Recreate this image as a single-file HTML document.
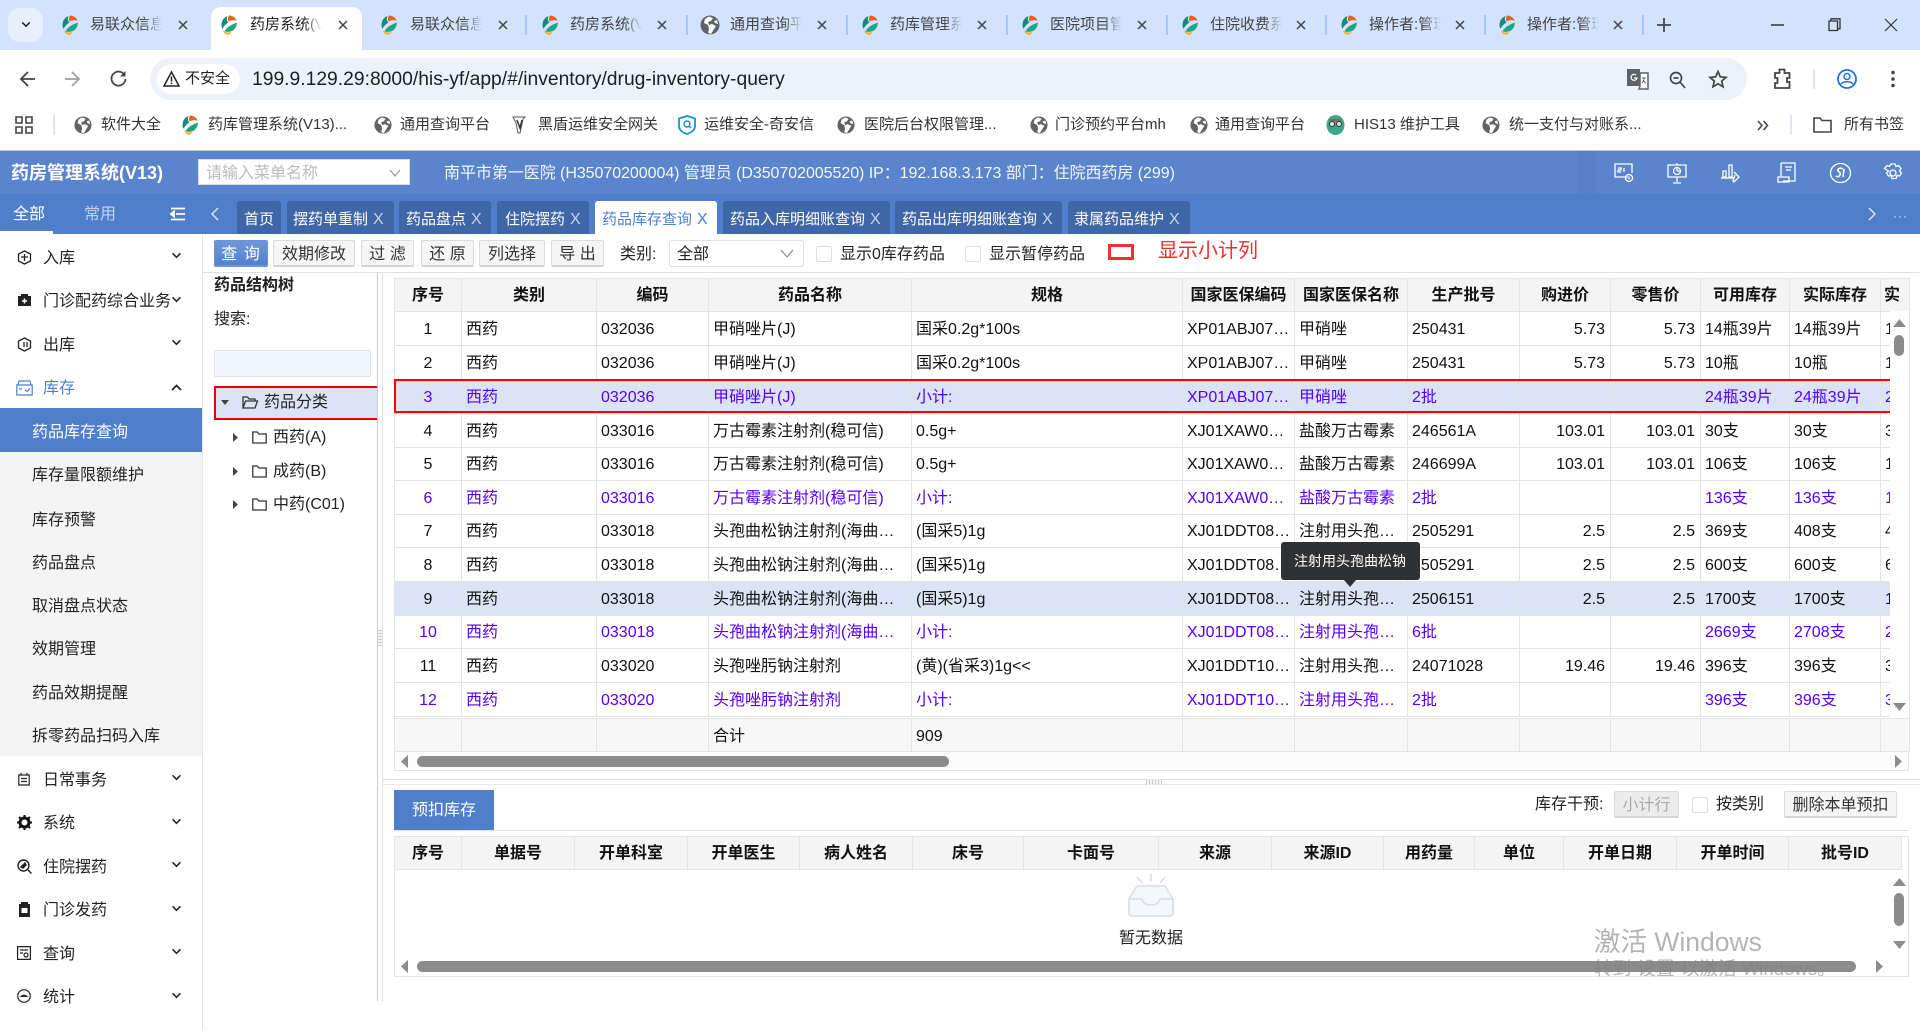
<!DOCTYPE html>
<html lang="zh"><head><meta charset="utf-8"><title>药房管理系统</title>
<style>
*{box-sizing:border-box}
html,body{margin:0;padding:0;width:1920px;height:1030px;overflow:hidden;background:#fff;font-family:"Liberation Sans","WenQuanYi Zen Hei","Noto Sans CJK SC",sans-serif;font-size:16px;color:#222}
.a{position:absolute}
.t{position:absolute;white-space:nowrap;line-height:20px}
.ct{position:absolute;top:15px;width:72px;overflow:hidden;white-space:nowrap;font-size:15px;line-height:20px;color:#444;-webkit-mask-image:linear-gradient(90deg,#000 75%,transparent);mask-image:linear-gradient(90deg,#000 75%,transparent)}
.sep{position:absolute;top:15px;width:2px;height:20px;background:#a9c7f5}
.bm{position:absolute;top:115px;white-space:nowrap;font-size:15px;line-height:20px;color:#333}
.tab{position:absolute;top:201px;height:33px;background:#3f66a6;color:#fff;font-size:15px;line-height:37px;border-radius:3px 3px 0 0;white-space:nowrap;padding-left:7px;overflow:hidden}
.tab b{font-weight:normal;font-size:16px;color:#c6d4ec;margin-left:5px}
.btn{position:absolute;top:240px;height:27px;line-height:27px;text-align:center;background:#f5f5f5;border:1px solid #dcdcdc;border-bottom:2px solid #d4d4d4;border-radius:2px;white-space:nowrap;color:#333}
.cb{position:absolute;width:16px;height:16px;border:1px solid #dcdfe6;border-radius:2px;background:#fff}
.m{position:absolute;left:43px;white-space:nowrap;line-height:20px}
.s{position:absolute;left:32px;white-space:nowrap;line-height:20px}
table{border-collapse:collapse;table-layout:fixed;position:absolute}
td,th{border:1px solid #e4e4e4;padding:2px 4px 0;white-space:nowrap;overflow:hidden;font-weight:normal;font-size:16px;line-height:20px;text-align:left;color:#111}
th{background:#f4f4f4;text-align:center;font-weight:bold;color:#111;padding:2px 0 0}
td.c{text-align:center}td.r{text-align:right;padding-right:5px}
tr.p td{color:#5500ff}
tr.sel td{background:#dbe4f4}
tr.foot td{background:#f7f7f7;padding-top:4px}
.bar{position:absolute;background:#8c8c8c;border-radius:6px}
svg{position:absolute;overflow:visible}
</style></head><body>
<svg width="0" height="0" style="position:absolute"><defs>
<symbol id="logo" viewBox="0 0 20 20"><path d="M10 .5C14 .5 17 3 17.500 6 15 4.500 12 5 9.500 6.500 8.500 4 9 2 10 .5Z" fill="#e8641b"/><path d="M8.500 1C4.500 2.500 2.500 6 2.500 10 2.500 11.500 3 13 3.500 13.800 5 10.800 7.500 8.500 9.500 7.500 7.500 6 7.500 3 8.500 1Z" fill="#128a7c"/><path d="M17.800 7.500C18 11 16 14.500 13 16 11 17 8 17 5.500 16.500 7 13 11 10 17.800 7.500Z" fill="#1ca77f"/><path d="M4 15.200C5.500 17.500 9 18 12.500 17 11.500 18.500 10.500 19.700 9.500 19.700 7 19.700 4.500 18 4 15.200Z" fill="#f4b120"/></symbol>
<symbol id="globe" viewBox="0 0 20 20"><circle cx="10" cy="10" r="9.500" fill="#5f6368"/><path d="M9 1.500 5 4 4 8l4 2 1 4-1 4 3 1 3-5 2-3-4-2-3 1-1-3 3-1 2-3-3-1ZM17 5l-3 1 1 2 3 1-1-4Z" fill="#fff"/></symbol>
<symbol id="chev" viewBox="0 0 12 8"><path d="M1.500 1.500 6 6l4.500-4.500" fill="none" stroke="#222" stroke-width="1.800"/></symbol>
<symbol id="x" viewBox="0 0 10 10"><path d="M1 1l8 8M9 1 1 9" fill="none" stroke="#444" stroke-width="1.500"/></symbol>
<symbol id="fold" viewBox="0 0 15 13"><path d="M.8 12V1h4.500l1.500 2h7.400v9Z" fill="none" stroke="#333" stroke-width="1.300"/></symbol>
</defs></svg>

<!-- Chrome tab strip -->
<div class="a" style="left:0;top:0;width:1920px;height:50px;background:#d3e3fd"></div>
<div class="a" style="left:8px;top:8px;width:35px;height:34px;background:#e9f0fd;border-radius:12px"></div>
<svg style="left:21px;top:21px" width="10" height="7"><use href="#chev" width="10" height="7"/></svg>
<div class="a" style="left:211px;top:7px;width:151px;height:44px;background:#fff;border-radius:10px 10px 0 0"></div>
<div class="a" style="left:0;top:50px;width:1920px;height:100px;background:#fff;border-radius:10px 10px 0 0"></div>

<svg style="left:60px;top:15px" width="20" height="20"><use href="#logo" width="20" height="20"/></svg><div class="ct" style="left:90px">易联众信息</div><svg style="left:178px;top:20px" width="10" height="10"><use href="#x" width="10" height="10"/></svg>
<svg style="left:219px;top:15px" width="20" height="20"><use href="#logo" width="20" height="20"/></svg><div class="ct" style="left:250px;color:#222">药房系统(V</div><svg style="left:338px;top:20px" width="10" height="10"><use href="#x" width="10" height="10"/></svg>
<svg style="left:379px;top:15px" width="20" height="20"><use href="#logo" width="20" height="20"/></svg><div class="ct" style="left:410px">易联众信息</div><svg style="left:498px;top:20px" width="10" height="10"><use href="#x" width="10" height="10"/></svg>
<svg style="left:540px;top:15px" width="20" height="20"><use href="#logo" width="20" height="20"/></svg><div class="ct" style="left:570px">药房系统(V</div><svg style="left:657px;top:20px" width="10" height="10"><use href="#x" width="10" height="10"/></svg>
<svg style="left:700px;top:15px" width="20" height="20"><use href="#globe" width="20" height="20"/></svg><div class="ct" style="left:730px">通用查询平</div><svg style="left:817px;top:20px" width="10" height="10"><use href="#x" width="10" height="10"/></svg>
<svg style="left:860px;top:15px" width="20" height="20"><use href="#logo" width="20" height="20"/></svg><div class="ct" style="left:890px">药库管理系</div><svg style="left:977px;top:20px" width="10" height="10"><use href="#x" width="10" height="10"/></svg>
<svg style="left:1020px;top:15px" width="20" height="20"><use href="#logo" width="20" height="20"/></svg><div class="ct" style="left:1050px">医院项目管</div><svg style="left:1137px;top:20px" width="10" height="10"><use href="#x" width="10" height="10"/></svg>
<svg style="left:1180px;top:15px" width="20" height="20"><use href="#logo" width="20" height="20"/></svg><div class="ct" style="left:1210px">住院收费系</div><svg style="left:1296px;top:20px" width="10" height="10"><use href="#x" width="10" height="10"/></svg>
<svg style="left:1339px;top:15px" width="20" height="20"><use href="#logo" width="20" height="20"/></svg><div class="ct" style="left:1369px">操作者:管理</div><svg style="left:1455px;top:20px" width="10" height="10"><use href="#x" width="10" height="10"/></svg>
<svg style="left:1497px;top:15px" width="20" height="20"><use href="#logo" width="20" height="20"/></svg><div class="ct" style="left:1527px">操作者:管理</div><svg style="left:1613px;top:20px" width="10" height="10"><use href="#x" width="10" height="10"/></svg>
<div class="sep" style="left:525px"></div><div class="sep" style="left:686px"></div><div class="sep" style="left:846px"></div><div class="sep" style="left:1006px"></div><div class="sep" style="left:1166px"></div><div class="sep" style="left:1325px"></div><div class="sep" style="left:1484px"></div><div class="sep" style="left:1642px"></div>
<svg style="left:1657px;top:18px" width="14" height="14"><path d="M7 0v14M0 7h14" stroke="#444" stroke-width="1.800"/></svg>
<svg style="left:1771px;top:24px" width="13" height="2"><path d="M0 1h13" stroke="#333" stroke-width="1.500"/></svg>
<svg style="left:1828px;top:18px" width="13" height="13"><path d="M3 3V.8h9v10H9.500M1 3h8.500v9.500H1Z" fill="none" stroke="#333" stroke-width="1.300"/></svg>
<svg style="left:1885px;top:19px" width="12" height="12"><path d="M0 0l12 12M12 0 0 12" stroke="#333" stroke-width="1.200"/></svg>

<!-- Toolbar -->
<svg style="left:19px;top:70px" width="17" height="18"><path d="M16 9H2M9 2 2 9l7 7" fill="none" stroke="#444" stroke-width="1.800"/></svg>
<svg style="left:64px;top:70px" width="17" height="18"><path d="M1 9h14M8 2l7 7-7 7" fill="none" stroke="#9aa0a6" stroke-width="1.800"/></svg>
<svg style="left:110px;top:70px" width="17" height="18"><path d="M14.500 5A7 7 0 1 0 15.500 9" fill="none" stroke="#444" stroke-width="1.800"/><path d="M15.500 1v5.500H10" fill="#444"/></svg>
<div class="a" style="left:150px;top:58px;width:1597px;height:42px;background:#edf2fa;border-radius:21px"></div>
<div class="a" style="left:157px;top:64px;width:83px;height:30px;background:#fff;border-radius:15px"></div>
<svg style="left:163px;top:71px" width="17" height="16"><path d="M8.500 1 16 15H1Z" fill="none" stroke="#222" stroke-width="1.500"/><path d="M8.500 5.500v5M8.500 11.500v1.500" stroke="#222" stroke-width="1.500"/></svg>
<div class="t" style="left:185px;top:69px;font-size:15px;color:#222">不安全</div>
<div class="t" style="left:252px;top:69px;font-size:19.300px;line-height:22px;color:#1f1f1f">199.9.129.29:8000/his-yf/app/#/inventory/drug-inventory-query</div>
<svg style="left:1627px;top:69px" width="22" height="21"><rect x="0" y="0" width="13" height="17" fill="#5f6368"/><path d="M13 4h8v16h-9l1-3V4Z" fill="#fff" stroke="#5f6368" stroke-width="1.500"/><path d="M9 6a3 3 0 1 0 1 3H7" fill="none" stroke="#fff" stroke-width="1.200"/><path d="M15 9h4M17 9c0 3-1 4-2 5M16 11c1 1 2 3 3 3" fill="none" stroke="#5f6368"/></svg>
<svg style="left:1669px;top:71px" width="17" height="18"><circle cx="7" cy="7" r="5.500" fill="none" stroke="#444" stroke-width="1.700"/><path d="M11 11l5 6M4.500 7h5" stroke="#444" stroke-width="1.700"/></svg>
<svg style="left:1709px;top:70px" width="18" height="18"><path d="M9 1.500 11.300 6.800 17 7.400l-4.300 3.700L14 16.800 9 13.800 4 16.800l1.300-5.700L1 7.400l5.700-.6Z" fill="none" stroke="#444" stroke-width="1.700"/></svg>
<svg style="left:1773px;top:68px" width="18" height="21"><path d="M2 5h4.500V1.500h5V5H16.500v5h-2.500v4h2.500v6H2v-5h2.500v-5H2Z" fill="none" stroke="#444" stroke-width="1.800"/></svg>
<div class="a" style="left:1813px;top:69px;width:2px;height:20px;background:#dbe6f7"></div>
<svg style="left:1837px;top:69px" width="20" height="20"><circle cx="10" cy="10" r="9" fill="#fff" stroke="#1a73e8" stroke-width="1.800"/><circle cx="10" cy="7.500" r="3" fill="none" stroke="#1a73e8" stroke-width="1.500"/><path d="M4 15c2-3 10-3 12 0" fill="none" stroke="#1a73e8" stroke-width="1.500"/></svg>
<svg style="left:1891px;top:70px" width="4" height="18"><circle cx="2" cy="2.500" r="1.800" fill="#444"/><circle cx="2" cy="9" r="1.800" fill="#444"/><circle cx="2" cy="15.500" r="1.800" fill="#444"/></svg>

<!-- Bookmarks -->
<svg style="left:15px;top:116px" width="18" height="18"><path d="M1 1h6v6H1ZM11 1h6v6h-6ZM1 11h6v6H1ZM11 11h6v6h-6Z" fill="none" stroke="#444" stroke-width="1.600"/></svg>
<div class="a" style="left:53px;top:115px;width:2px;height:20px;background:#dbe6f7"></div>
<svg style="left:74px;top:116px" width="18" height="18"><use href="#globe" width="18" height="18"/></svg><div class="bm" style="left:101px">软件大全</div>
<svg style="left:180px;top:115px" width="20" height="20"><use href="#logo" width="20" height="20"/></svg><div class="bm" style="left:208px">药库管理系统(V13)...</div>
<svg style="left:374px;top:116px" width="18" height="18"><use href="#globe" width="18" height="18"/></svg><div class="bm" style="left:400px">通用查询平台</div>
<svg style="left:512px;top:115px" width="14" height="20"><path d="M1 2h12l-2 2-3 14H6L4 8 1 2Z" fill="#fff" stroke="#555"/><path d="M5 5l3 8 2-8" fill="none" stroke="#333" stroke-width="1.500"/></svg><div class="bm" style="left:538px">黑盾运维安全网关</div>
<svg style="left:678px;top:115px" width="18" height="20"><path d="M9 1 17 3.500V11c0 4-4 7-8 8-4-1-8-4-8-8V3.500Z" fill="none" stroke="#1a8fe0" stroke-width="1.800"/><circle cx="9" cy="9" r="3" fill="none" stroke="#1a8fe0" stroke-width="1.500"/><path d="M11 11l2 2" stroke="#1a8fe0" stroke-width="1.500"/></svg><div class="bm" style="left:704px">运维安全-奇安信</div>
<svg style="left:837px;top:116px" width="18" height="18"><use href="#globe" width="18" height="18"/></svg><div class="bm" style="left:864px">医院后台权限管理...</div>
<svg style="left:1030px;top:116px" width="18" height="18"><use href="#globe" width="18" height="18"/></svg><div class="bm" style="left:1055px">门诊预约平台mh</div>
<svg style="left:1190px;top:116px" width="18" height="18"><use href="#globe" width="18" height="18"/></svg><div class="bm" style="left:1215px">通用查询平台</div>
<svg style="left:1326px;top:115px" width="19" height="20"><ellipse cx="9.500" cy="10" rx="9" ry="10" fill="#3ba58d"/><circle cx="6" cy="9" r="2.500" fill="#cfe9e4" stroke="#333"/><circle cx="13" cy="9" r="2.500" fill="#cfe9e4" stroke="#333"/><path d="M4 5h11" stroke="#a5532a" stroke-width="1.500"/></svg><div class="bm" style="left:1354px">HIS13 维护工具</div>
<svg style="left:1482px;top:116px" width="18" height="18"><use href="#globe" width="18" height="18"/></svg><div class="bm" style="left:1509px">统一支付与对账系...</div>
<svg style="left:1757px;top:120px" width="12" height="11"><path d="M1 1l4 4.500L1 10M6.500 1l4 4.500-4 4.500" fill="none" stroke="#444" stroke-width="1.500"/></svg>
<div class="a" style="left:1790px;top:115px;width:2px;height:20px;background:#dbe6f7"></div>
<svg style="left:1813px;top:117px" width="19" height="16"><path d="M1 1h6l2 2.500h9V15H1Z" fill="none" stroke="#444" stroke-width="1.600"/></svg>
<div class="bm" style="left:1844px;color:#333">所有书签</div>
<div class="a" style="left:0;top:150px;width:1920px;height:1px;background:#c8c8c8"></div>

<!-- App header -->
<div class="a" style="left:0;top:151px;width:1920px;height:43px;background:#5a84cc"></div>
<div class="a" style="left:1577px;top:151px;width:19px;height:43px;background:#5680c8"></div>
<div class="a" style="left:0;top:194px;width:1920px;height:40px;background:#4f7ecb"></div>
<div class="t" style="left:11px;top:163px;font-size:18px;font-weight:bold;color:#fff">药房管理系统(V13)</div>
<div class="a" style="left:198px;top:159px;width:212px;height:26px;background:#fff;border:1px solid #ddd"></div>
<div class="t" style="left:206px;top:164px;color:#bbb">请输入菜单名称</div>
<svg style="left:389px;top:169px" width="12" height="8"><path d="M1 1l5 6 5-6" fill="none" stroke="#999" stroke-width="1.200"/></svg>
<div class="t" style="left:444px;top:164px;color:#fff;opacity:.93;font-size:16px;letter-spacing:-.05px">南平市第一医院 (H35070200004) 管理员 (D350702005520) IP：192.168.3.173 部门：住院西药房 (299)</div>
<svg style="left:1614px;top:163px" width="20" height="20" fill="none" stroke="#fff" stroke-width="1.300"><path d="M14 14H1V1h17v9"/><circle cx="15" cy="15" r="3.500"/><path d="M15 13.500v3M4 5h3v2H4v2h3M10 5v4"/></svg>
<svg style="left:1667px;top:163px" width="20" height="21" fill="none" stroke="#fff" stroke-width="1.300"><path d="M1 2h18v12H1ZM10 0v2M10 14v5M6 20h8"/><circle cx="10" cy="8" r="3.500"/><path d="M10 8V4.500M10 8h3.500"/></svg>
<svg style="left:1721px;top:163px" width="20" height="20" fill="none" stroke="#fff" stroke-width="1.300"><path d="M2 8h3v6H2ZM8 2h3v12H8ZM0 15h13M13 9l5 5-5 5-1-1 2-6"/></svg>
<svg style="left:1777px;top:162px" width="20" height="22" fill="none" stroke="#fff" stroke-width="1.300"><path d="M4 1h14v18H6M4 1v14M1 15h11v5H1ZM8 5h7M9 8h5"/></svg>
<svg style="left:1830px;top:163px" width="21" height="20" fill="none" stroke="#fff" stroke-width="1.300"><ellipse cx="10.500" cy="10" rx="10" ry="9.500"/><path d="M13 6c-3-2-6 0-5 2 1 1 3 1 2 4-1 2-3 2-4 1M14 6l-1 8" stroke-width="1.600"/></svg>
<svg style="left:1883px;top:163px" width="20" height="20" fill="none" stroke="#fff" stroke-width="1.300"><path d="M8 1h4l1 2.500 2.500-1 2.500 3-1.500 2.500 2 2-2 3-2.500-.5-1 3h-4l-1-3-2.500.5-2-3 2-2L1.500 5.500 4 2.500l2.500 1Z"/><circle cx="10" cy="10" r="3"/></svg>

<!-- Nav tabs row -->
<div class="t" style="left:13px;top:205px;color:#fff">全部</div>
<div class="a" style="left:0;top:231px;width:53px;height:3px;background:#fff"></div>
<div class="t" style="left:84px;top:205px;color:#c3d2ec">常用</div>
<svg style="left:171px;top:207px" width="14" height="14"><path d="M0 1.500h14M5 7h9M0 12.500h14M0 7l3-2.500v5Z" stroke="#fff" stroke-width="1.800" fill="#fff"/></svg>
<svg style="left:210px;top:207px" width="9" height="14"><path d="M8 1 2 7l6 6" fill="none" stroke="#dfe8f6" stroke-width="1.400"/></svg>
<div class="tab" style="left:237px;width:44px">首页</div>
<div class="tab" style="left:287px;width:107px;padding-left:6px">摆药单重制<b>X</b></div>
<div class="tab" style="left:399px;width:92px">药品盘点<b>X</b></div>
<div class="tab" style="left:497px;width:92px;padding-left:8px">住院摆药<b>X</b></div>
<div class="tab" style="left:595px;width:122px;background:#fff;color:#4f7ecb">药品库存查询<b style="color:#4f7ecb">X</b></div>
<div class="tab" style="left:723px;width:167px">药品入库明细账查询<b>X</b></div>
<div class="tab" style="left:895px;width:167px">药品出库明细账查询<b>X</b></div>
<div class="tab" style="left:1068px;width:122px;padding-left:6px">隶属药品维护<b>X</b></div>
<svg style="left:1868px;top:207px" width="9" height="14"><path d="M1 1l6 6-6 6" fill="none" stroke="#dfe8f6" stroke-width="1.400"/></svg>
<div class="t" style="left:1893px;top:206px;color:#dfe8f6;font-size:12px;letter-spacing:1px">···</div>

<!-- Sidebar -->
<div class="a" style="left:202px;top:234px;width:1px;height:796px;background:#e6e6e6"></div>
<div class="a" style="left:0;top:408px;width:202px;height:348px;background:#f4f4f4"></div>
<div class="a" style="left:0;top:408px;width:202px;height:44px;background:#4f7ecb"></div>
<svg style="left:17px;top:250px" width="15" height="15" fill="none" stroke="#222" stroke-width="1.300"><path d="M7.500 1l6 3v7l-6 3-6-3V4ZM4 7h7M7.500 4v7"/></svg><div class="m" style="top:249px">入库</div>
<svg style="left:18px;top:293px" width="13" height="14"><path d="M3 3V1h7v2h3v10H0V3Z" fill="#222"/><path d="M6.500 5.500v5M4 8h5" stroke="#fff" stroke-width="1.500"/></svg><div class="m" style="top:292px">门诊配药综合业务</div>
<svg style="left:17px;top:337px" width="15" height="15" fill="none" stroke="#222" stroke-width="1.300"><path d="M7.500 1l6 3v7l-6 3-6-3V4ZM7 5v5M10 5v5"/></svg><div class="m" style="top:336px">出库</div>
<svg style="left:16px;top:380px" width="17" height="16" fill="none" stroke="#4f7ecb" stroke-width="1.200"><path d="M2 5l1-4h11l1 4M.8 5h15.400v10H.8ZM3 9h3M9 10l2 1.500 3-3"/></svg><div class="m" style="top:379px;color:#4f7ecb">库存</div>
<div class="s" style="top:423px;color:#fff">药品库存查询</div>
<div class="s" style="top:466px">库存量限额维护</div>
<div class="s" style="top:511px">库存预警</div>
<div class="s" style="top:554px">药品盘点</div>
<div class="s" style="top:597px">取消盘点状态</div>
<div class="s" style="top:640px">效期管理</div>
<div class="s" style="top:684px">药品效期提醒</div>
<div class="s" style="top:727px">拆零药品扫码入库</div>
<svg style="left:18px;top:773px" width="12" height="13" fill="none" stroke="#222" stroke-width="1.200"><path d="M.8 2h10.400v10H.8ZM3 2V0M9 2V0M3 5.500h6M3 8.500h6"/></svg><div class="m" style="top:771px">日常事务</div>
<svg style="left:17px;top:815px" width="15" height="15"><circle cx="7.500" cy="7.500" r="4.500" fill="none" stroke="#111" stroke-width="3"/><path d="M7.500 0v3M7.500 12v3M0 7.500h3M12 7.500h3M2 2l2 2M11 11l2 2M13 2l-2 2M4 11l-2 2" stroke="#111" stroke-width="2"/></svg><div class="m" style="top:814px">系统</div>
<svg style="left:17px;top:859px" width="15" height="15" fill="none" stroke="#222" stroke-width="1.400"><circle cx="6.500" cy="6.500" r="5.500"/><path d="M11 11l3.500 3.500"/><path d="M4 8l4-4 1 2-3 3Z" fill="#222"/></svg><div class="m" style="top:858px">住院摆药</div>
<svg style="left:19px;top:902px" width="11" height="15"><path d="M2 0h7v2h2v13H0V2h2Z" fill="#222"/><rect x="2.500" y="6" width="6" height="5" fill="#fff"/></svg><div class="m" style="top:901px">门诊发药</div>
<svg style="left:17px;top:946px" width="14" height="14" fill="none" stroke="#222" stroke-width="1.200"><path d="M.6.6h12.800v12.800H.6ZM3 4h8M3 7h3"/><circle cx="9" cy="9" r="2"/></svg><div class="m" style="top:945px">查询</div>
<svg style="left:17px;top:989px" width="14" height="14"><circle cx="7" cy="7" r="6.300" fill="none" stroke="#222" stroke-width="1.200"/><path d="M3 8c1-3 7-3 8 0Z" fill="#222"/></svg><div class="m" style="top:988px">统计</div>
<svg style="left:171px;top:252px" width="11" height="7"><use href="#chev" width="11" height="7"/></svg>
<svg style="left:171px;top:296px" width="11" height="7"><use href="#chev" width="11" height="7"/></svg>
<svg style="left:171px;top:339px" width="11" height="7"><use href="#chev" width="11" height="7"/></svg>
<svg style="left:171px;top:384px" width="11" height="7"><path d="M1 6l4.500-4.500L10 6" fill="none" stroke="#222" stroke-width="1.700"/></svg>
<svg style="left:171px;top:774px" width="11" height="7"><use href="#chev" width="11" height="7"/></svg>
<svg style="left:171px;top:818px" width="11" height="7"><use href="#chev" width="11" height="7"/></svg>
<svg style="left:171px;top:861px" width="11" height="7"><use href="#chev" width="11" height="7"/></svg>
<svg style="left:171px;top:905px" width="11" height="7"><use href="#chev" width="11" height="7"/></svg>
<svg style="left:171px;top:948px" width="11" height="7"><use href="#chev" width="11" height="7"/></svg>
<svg style="left:171px;top:992px" width="11" height="7"><use href="#chev" width="11" height="7"/></svg>

<!-- Action bar -->
<div class="btn" style="left:214px;width:54px;background:linear-gradient(#6f97da,#5480cc);border-color:#6a92d6;color:#fff;letter-spacing:1px">查 询</div>
<div class="btn" style="left:273px;width:82px">效期修改</div>
<div class="btn" style="left:361px;width:53px">过 滤</div>
<div class="btn" style="left:421px;width:53px">还 原</div>
<div class="btn" style="left:479px;width:66px">列选择</div>
<div class="btn" style="left:551px;width:53px">导 出</div>
<div class="t" style="left:620px;top:245px">类别:</div>
<div class="a" style="left:669px;top:240px;width:135px;height:27px;border:1px solid #dcdfe6;border-radius:3px;background:#fff"></div>
<div class="t" style="left:677px;top:245px">全部</div>
<svg style="left:780px;top:249px" width="14" height="9"><path d="M1 1l6 7 6-7" fill="none" stroke="#888" stroke-width="1.200"/></svg>
<div class="cb" style="left:816px;top:246px"></div><div class="t" style="left:840px;top:245px">显示0库存药品</div>
<div class="cb" style="left:965px;top:246px"></div><div class="t" style="left:989px;top:245px">显示暂停药品</div>
<div class="a" style="left:1108px;top:244px;width:26px;height:16px;border:3px solid #f42d2d"></div>
<div class="t" style="left:1158px;top:240px;font-size:20px;line-height:22px;color:#f42d2d">显示小计列</div>
<div class="a" style="left:203px;top:272px;width:1717px;height:1px;background:#e0e0e0"></div>

<!-- Tree -->
<div class="t" style="left:214px;top:276px;font-weight:bold">药品结构树</div>
<div class="t" style="left:214px;top:310px">搜索:</div>
<div class="a" style="left:214px;top:350px;width:157px;height:27px;background:#eff6fe;border:1px solid #dfe3e8;border-radius:2px"></div>
<div class="a" style="left:214px;top:386px;width:163px;height:34px;background:#dbe4f4;border:2px solid #e60000;border-right:0"></div>
<svg style="left:221px;top:400px" width="8" height="5"><path d="M0 0h8L4 5Z" fill="#444"/></svg>
<svg style="left:242px;top:396px" width="16" height="13" fill="none" stroke="#333" stroke-width="1.300"><path d="M1 12V1h4.500l1.500 2h6v2M1 12l2.500-7H15.500L13 12Z"/></svg>
<div class="t" style="left:264px;top:393px">药品分类</div>
<svg style="left:233px;top:433px" width="5" height="9"><path d="M0 0v9l5-4.500Z" fill="#444"/></svg><svg style="left:252px;top:431px" width="15" height="13"><use href="#fold" width="15" height="13"/></svg><div class="t" style="left:273px;top:428px">西药(A)</div>
<svg style="left:233px;top:467px" width="5" height="9"><path d="M0 0v9l5-4.500Z" fill="#444"/></svg><svg style="left:252px;top:465px" width="15" height="13"><use href="#fold" width="15" height="13"/></svg><div class="t" style="left:273px;top:462px">成药(B)</div>
<svg style="left:233px;top:500px" width="5" height="9"><path d="M0 0v9l5-4.500Z" fill="#444"/></svg><svg style="left:252px;top:498px" width="15" height="13"><use href="#fold" width="15" height="13"/></svg><div class="t" style="left:273px;top:495px">中药(C01)</div>

<!-- Splitter -->
<div class="a" style="left:377px;top:273px;width:6px;height:728px;border-left:1px solid #ccc;border-right:1px solid #e2e2e2"></div>
<div class="a" style="left:378px;top:630px;width:4px;height:16px;background:repeating-linear-gradient(#ccc 0 1px,#f4f4f4 1px 3px)"></div>

<!-- Main table -->
<div class="a" style="left:394px;top:278px;width:1515px;height:493px;border:1px solid #e4e4e4;overflow:hidden;background:#fff"></div>
<table style="left:394px;top:278px;width:1515px">
<colgroup><col style="width:67px"><col style="width:135px"><col style="width:112px"><col style="width:203px"><col style="width:271px"><col style="width:112px"><col style="width:113px"><col style="width:112px"><col style="width:91px"><col style="width:90px"><col style="width:89px"><col style="width:91px"><col style="width:29px"></colgroup>
<tr style="height:33px"><th>序号</th><th>类别</th><th>编码</th><th>药品名称</th><th>规格</th><th>国家医保编码</th><th>国家医保名称</th><th>生产批号</th><th>购进价</th><th>零售价</th><th>可用库存</th><th>实际库存</th><th style="text-align:left;padding-left:3px">实</th></tr>
<tr style="height:34px"><td class="c">1</td><td>西药</td><td>032036</td><td>甲硝唑片(J)</td><td>国采0.2g*100s</td><td>XP01ABJ07…</td><td>甲硝唑</td><td>250431</td><td class="r">5.73</td><td class="r">5.73</td><td>14瓶39片</td><td>14瓶39片</td><td>1</td></tr>
<tr style="height:34px"><td class="c">2</td><td>西药</td><td>032036</td><td>甲硝唑片(J)</td><td>国采0.2g*100s</td><td>XP01ABJ07…</td><td>甲硝唑</td><td>250431</td><td class="r">5.73</td><td class="r">5.73</td><td>10瓶</td><td>10瓶</td><td>1</td></tr>
<tr class="p sel" style="height:34px"><td class="c">3</td><td>西药</td><td>032036</td><td>甲硝唑片(J)</td><td>小计:</td><td>XP01ABJ07…</td><td>甲硝唑</td><td>2批</td><td></td><td></td><td>24瓶39片</td><td>24瓶39片</td><td>2</td></tr>
<tr style="height:34px"><td class="c">4</td><td>西药</td><td>033016</td><td>万古霉素注射剂(稳可信)</td><td>0.5g+</td><td>XJ01XAW0…</td><td>盐酸万古霉素</td><td>246561A</td><td class="r">103.01</td><td class="r">103.01</td><td>30支</td><td>30支</td><td>3</td></tr>
<tr style="height:33px"><td class="c">5</td><td>西药</td><td>033016</td><td>万古霉素注射剂(稳可信)</td><td>0.5g+</td><td>XJ01XAW0…</td><td>盐酸万古霉素</td><td>246699A</td><td class="r">103.01</td><td class="r">103.01</td><td>106支</td><td>106支</td><td>1</td></tr>
<tr class="p" style="height:34px"><td class="c">6</td><td>西药</td><td>033016</td><td>万古霉素注射剂(稳可信)</td><td>小计:</td><td>XJ01XAW0…</td><td>盐酸万古霉素</td><td>2批</td><td></td><td></td><td>136支</td><td>136支</td><td>1</td></tr>
<tr style="height:33px"><td class="c">7</td><td>西药</td><td>033018</td><td>头孢曲松钠注射剂(海曲…</td><td>(国采5)1g</td><td>XJ01DDT08…</td><td>注射用头孢…</td><td>2505291</td><td class="r">2.5</td><td class="r">2.5</td><td>369支</td><td>408支</td><td>4</td></tr>
<tr style="height:34px"><td class="c">8</td><td>西药</td><td>033018</td><td>头孢曲松钠注射剂(海曲…</td><td>(国采5)1g</td><td>XJ01DDT08…</td><td>注射用头孢…</td><td>2505291</td><td class="r">2.5</td><td class="r">2.5</td><td>600支</td><td>600支</td><td>6</td></tr>
<tr class="sel" style="height:34px"><td class="c">9</td><td>西药</td><td>033018</td><td>头孢曲松钠注射剂(海曲…</td><td>(国采5)1g</td><td>XJ01DDT08…</td><td>注射用头孢…</td><td>2506151</td><td class="r">2.5</td><td class="r">2.5</td><td>1700支</td><td>1700支</td><td>1</td></tr>
<tr class="p" style="height:33px"><td class="c">10</td><td>西药</td><td>033018</td><td>头孢曲松钠注射剂(海曲…</td><td>小计:</td><td>XJ01DDT08…</td><td>注射用头孢…</td><td>6批</td><td></td><td></td><td>2669支</td><td>2708支</td><td>2</td></tr>
<tr style="height:34px"><td class="c">11</td><td>西药</td><td>033020</td><td>头孢唑肟钠注射剂</td><td>(黄)(省采3)1g&lt;&lt;</td><td>XJ01DDT10…</td><td>注射用头孢…</td><td>24071028</td><td class="r">19.46</td><td class="r">19.46</td><td>396支</td><td>396支</td><td>3</td></tr>
<tr class="p" style="height:34px"><td class="c">12</td><td>西药</td><td>033020</td><td>头孢唑肟钠注射剂</td><td>小计:</td><td>XJ01DDT10…</td><td>注射用头孢…</td><td>2批</td><td></td><td></td><td>396支</td><td>396支</td><td>3</td></tr>
<tr style="height:2px"><td colspan="13" style="padding:0;line-height:0;font-size:0"></td></tr>
<tr class="foot" style="height:33px"><td></td><td></td><td></td><td>合计</td><td>909</td><td></td><td></td><td></td><td></td><td></td><td></td><td></td><td></td></tr>
</table>
<!-- red box -->
<div class="a" style="left:394px;top:379px;width:1496px;height:34px;border-top:2px solid #f00;border-bottom:2px solid #f00;border-left:2px solid #f00"></div>
<!-- v scrollbar -->
<div class="a" style="left:1890px;top:311px;width:19px;height:407px;background:#fff"></div>
<svg style="left:1893px;top:319px" width="13" height="8"><path d="M6.500 0 13 8H0Z" fill="#8c8c8c"/></svg>
<div class="bar" style="left:1894px;top:335px;width:10px;height:21px"></div>
<svg style="left:1893px;top:703px" width="13" height="8"><path d="M0 0h13L6.500 8Z" fill="#8c8c8c"/></svg>
<!-- h scrollbar -->
<div class="a" style="left:395px;top:752px;width:1513px;height:18px;background:#fcfcfc"></div>
<svg style="left:401px;top:755px" width="7" height="13"><path d="M7 0v13L0 6.500Z" fill="#8c8c8c"/></svg>
<div class="bar" style="left:417px;top:756px;width:532px;height:11px"></div>
<svg style="left:1895px;top:755px" width="7" height="13"><path d="M0 0v13l7-6.500Z" fill="#8c8c8c"/></svg>
<!-- tooltip -->
<div class="a" style="left:1281px;top:542px;width:139px;height:38px;background:#303133;border-radius:3px"></div>
<svg style="left:1344px;top:580px" width="12" height="7"><path d="M0 0h12L6 7Z" fill="#303133"/></svg>
<div class="t" style="left:1294px;top:551px;font-size:14px;color:#fff">注射用头孢曲松钠</div>

<!-- horizontal splitter -->
<div class="a" style="left:383px;top:779px;width:1537px;height:6px;border-top:1px solid #ddd;border-bottom:1px solid #e6e6e6"></div>
<div class="a" style="left:1146px;top:779px;width:16px;height:6px;background:repeating-linear-gradient(90deg,#ccc 0 1px,#f4f4f4 1px 3px)"></div>

<!-- bottom -->
<div class="a" style="left:394px;top:790px;width:100px;height:41px;background:#4f7ecb;color:#fff;text-align:center;line-height:42px">预扣库存</div>
<div class="a" style="left:394px;top:830px;width:1515px;height:1px;background:#e4e4e4"></div>
<div class="t" style="left:1535px;top:795px">库存干预:</div>
<div class="btn" style="left:1614px;top:791px;width:65px;background:#ececec;color:#aaa">小计行</div>
<div class="cb" style="left:1692px;top:797px"></div>
<div class="t" style="left:1716px;top:795px">按类别</div>
<div class="btn" style="left:1784px;top:791px;width:113px">删除本单预扣</div>

<div class="a" style="left:394px;top:836px;width:1515px;height:141px;border:1px solid #e4e4e4;background:#fff"></div>
<table style="left:394px;top:836px;width:1507px">
<colgroup><col style="width:67px"><col style="width:113px"><col style="width:113px"><col style="width:112px"><col style="width:113px"><col style="width:111px"><col style="width:135px"><col style="width:113px"><col style="width:112px"><col style="width:91px"><col style="width:89px"><col style="width:113px"><col style="width:112px"><col style="width:113px"></colgroup>
<tr style="height:33px"><th>序号</th><th>单据号</th><th>开单科室</th><th>开单医生</th><th>病人姓名</th><th>床号</th><th>卡面号</th><th>来源</th><th>来源ID</th><th>用药量</th><th>单位</th><th>开单日期</th><th>开单时间</th><th>批号ID</th></tr>
</table>
<svg style="left:1128px;top:873px" width="46" height="45" fill="none" stroke="#dcdfe8" stroke-width="1.700"><path d="M23 1v8M9 4l5 6M37 4l-5 6"/><path d="M1 26 9 13h28l8 13v14q0 3-3 3H4q-3 0-3-3Z" fill="#f6f7fa"/><path d="M1 26h13q1 6 9 6t9-6h13"/></svg>
<div class="t" style="left:1119px;top:929px">暂无数据</div>
<svg style="left:1893px;top:878px" width="13" height="8"><path d="M6.500 0 13 8H0Z" fill="#8c8c8c"/></svg>
<div class="bar" style="left:1894px;top:893px;width:10px;height:33px"></div>
<svg style="left:1893px;top:941px" width="13" height="8"><path d="M0 0h13L6.500 8Z" fill="#8c8c8c"/></svg>
<svg style="left:401px;top:960px" width="7" height="13"><path d="M7 0v13L0 6.500Z" fill="#8c8c8c"/></svg>
<div class="bar" style="left:417px;top:961px;width:1439px;height:11px"></div>
<svg style="left:1876px;top:960px" width="7" height="13"><path d="M0 0v13l7-6.500Z" fill="#8c8c8c"/></svg>

<!-- watermark -->
<div class="t" style="left:1594px;top:926px;font-size:26.500px;line-height:32px;color:rgba(130,130,130,.6)">激活 Windows</div>
<div class="t" style="left:1594px;top:957px;font-size:18.600px;line-height:24px;color:rgba(130,130,130,.6)">转到“设置”以激活 Windows。</div>
</body></html>
